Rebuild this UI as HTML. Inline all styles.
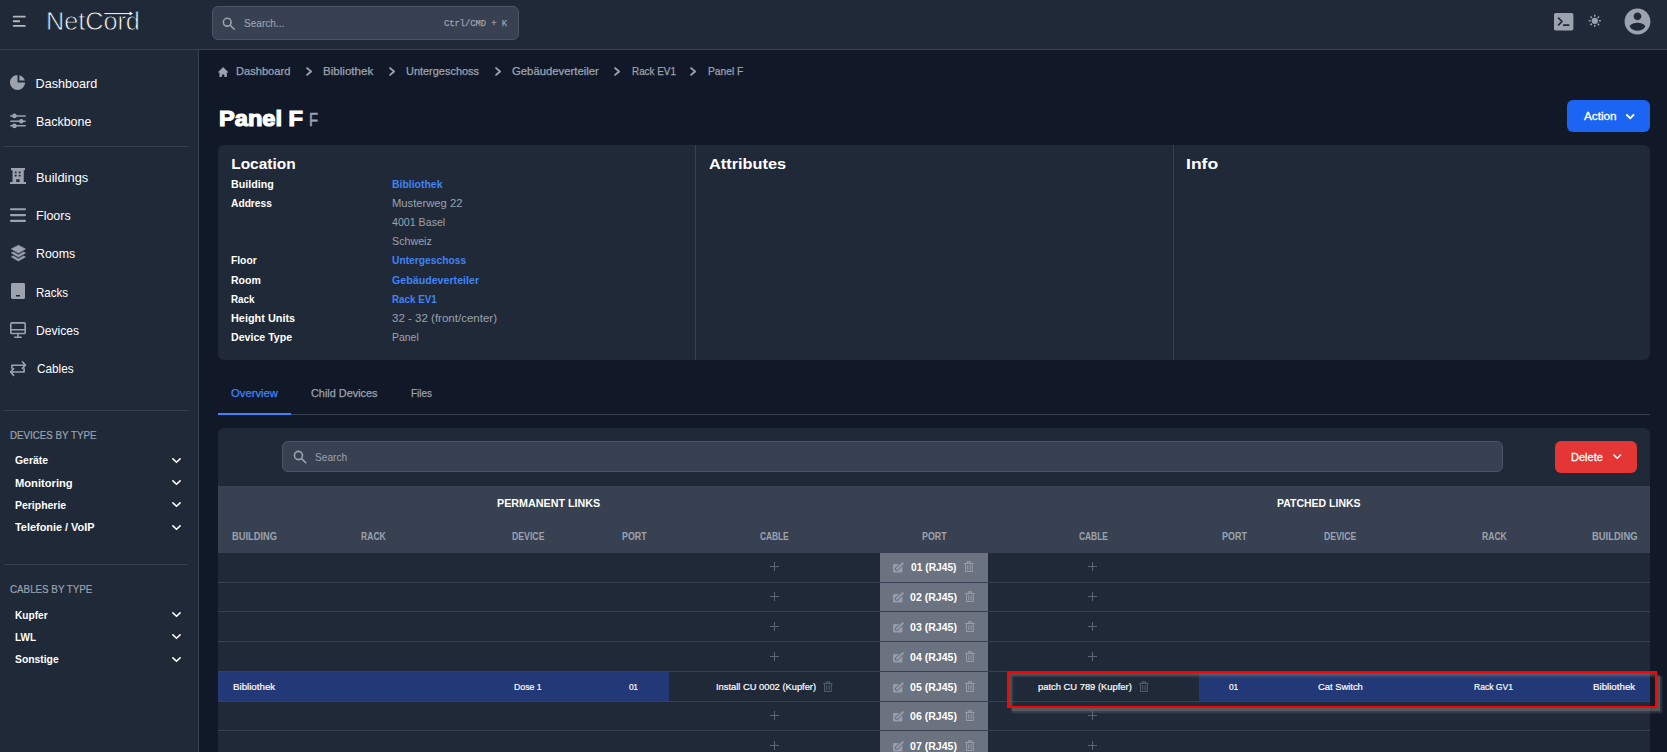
<!DOCTYPE html>
<html lang="de">
<head>
<meta charset="utf-8">
<title>NetCord – Panel F</title>
<style>
*{box-sizing:border-box;margin:0;padding:0}
html,body{width:1667px;height:752px;overflow:hidden;background:#111827}
body{position:relative;font-family:"Liberation Sans",Arial,sans-serif;color:#fff}
.t{position:absolute;white-space:nowrap;font-weight:400;font-style:normal;text-decoration:none;display:block;transform-origin:0 50%}
.a{position:absolute;display:block}
svg{position:absolute;display:block;overflow:visible}
nav.top{position:absolute;left:0;top:0;width:1667px;height:50px;background:#1f2937;border-bottom:1px solid #374151}
aside{position:absolute;left:0;top:50px;width:199px;height:702px;background:#1f2937;border-right:1px solid #374151}
hr{position:absolute;border:0;height:1px;background:#374151}
.box{position:absolute;background:#374151;border:1px solid #4b5563;border-radius:6px}
.btn{position:absolute;border-radius:6px}
.card{position:absolute;background:#1f2937;border-radius:6px}
.plus{position:absolute;width:9px;height:9px}
.plus:before{content:"";position:absolute;left:4px;top:0;width:1px;height:9px;background:#5c6573}
.plus:after{content:"";position:absolute;left:0;top:4px;width:9px;height:1px;background:#5c6573}
</style>
</head>
<body>
<!-- ===== top navigation ===== -->
<nav class="top"></nav>
<header>
<svg style="left:10.2px;top:12.1px" width="18.5" height="18.5" viewBox="0 0 20 20" fill="#b3b8c0"><path fill-rule="evenodd" d="M3 5a1 1 0 011-1h12a1 1 0 110 2H4a1 1 0 01-1-1zM3 10a1 1 0 011-1h6a1 1 0 110 2H4a1 1 0 01-1-1zM3 15a1 1 0 011-1h12a1 1 0 110 2H4a1 1 0 01-1-1z" clip-rule="evenodd"/></svg>
<svg style="left:104px;top:10px" width="30" height="8" viewBox="0 0 30 8"><path d="M0.4 3.6H27" stroke="#fff" stroke-width="1" fill="none"/><path d="M25.6 1.6L29 3.6L25.6 5.6Z" fill="#fff"/></svg>
<div class="box" style="left:212px;top:6px;width:307px;height:34px"></div>
<svg style="left:220.9px;top:15.8px" width="15.6" height="15.6" viewBox="0 0 20 20" fill="#9ca3af"><path fill-rule="evenodd" d="M8 4a4 4 0 100 8 4 4 0 000-8zM2 8a6 6 0 1110.89 3.476l4.817 4.817a1 1 0 01-1.414 1.414l-4.816-4.816A6 6 0 012 8z" clip-rule="evenodd"/></svg>
<a class="t" style='left:46.06px;top:7px;font-size:25.8px;line-height:28px;color:#fff;transform:scaleX(0.9764);-webkit-text-stroke:0.8px #1f2937;'>NetCord</a>
<span class="t" style='left:244.27px;top:17px;font-size:11px;line-height:12px;color:#9ca3af;transform:scaleX(0.9135);-webkit-text-stroke:0.15px #9ca3af;'>Search...</span>
<kbd class="t" style='left:444.02px;top:18px;font-size:9.3px;line-height:11px;color:#9ca3af;transform:scaleX(0.9420);font-family:"Liberation Mono", monospace;-webkit-text-stroke:0.25px #9ca3af;'>Ctrl/CMD + K</kbd>
<!-- terminal -->
<svg style="left:1553.7px;top:12.6px" width="19.4" height="17.5" viewBox="0 0 19.4 17.5"><rect x="0" y="0" width="19.4" height="17.5" rx="1.8" fill="#9ca3af"/><path d="M4.6 5.2L8.0 8.5L4.6 11.8M9.7 12.2H14.7" stroke="#1f2937" stroke-width="1.7" fill="none" stroke-linecap="round" stroke-linejoin="round"/></svg>
<!-- sun -->
<svg style="left:1587.2px;top:13.2px" width="15.6" height="15.6" viewBox="0 0 20 20" fill="#9ca3af"><path fill-rule="evenodd" d="M10 2a1 1 0 011 1v1a1 1 0 11-2 0V3a1 1 0 011-1zm4 8a4 4 0 11-8 0 4 4 0 018 0zm-.464 4.95l.707.707a1 1 0 001.414-1.414l-.707-.707a1 1 0 00-1.414 1.414zm2.12-10.607a1 1 0 010 1.414l-.706.707a1 1 0 11-1.414-1.414l.707-.707a1 1 0 011.414 0zM17 11a1 1 0 100-2h-1a1 1 0 100 2h1zm-7 4a1 1 0 011 1v1a1 1 0 11-2 0v-1a1 1 0 011-1zM5.05 6.464A1 1 0 106.465 5.05l-.708-.707a1 1 0 00-1.414 1.414l.707.707zm1.414 8.486l-.707.707a1 1 0 01-1.414-1.414l.707-.707a1 1 0 011.414 1.414zM4 11a1 1 0 100-2H3a1 1 0 000 2h1z" clip-rule="evenodd"/></svg>
<!-- avatar -->
<svg style="left:1621.6px;top:5.6px" width="31" height="31" viewBox="0 0 24 24" fill="#9ca3af"><path d="M12 2C6.48 2 2 6.48 2 12s4.48 10 10 10 10-4.48 10-10S17.52 2 12 2zm0 3c1.66 0 3 1.34 3 3s-1.34 3-3 3-3-1.34-3-3 1.34-3 3-3zm0 14.2c-2.5 0-4.71-1.28-6-3.22.03-1.99 4-3.08 6-3.08 1.99 0 5.97 1.09 6 3.08-1.29 1.94-3.5 3.22-6 3.22z"/></svg>
</header>

<!-- ===== sidebar ===== -->
<aside></aside>
<section id="sidebar">
<svg style="left:8.35px;top:73.19999999999999px" width="19.0" height="19.0" viewBox="0 0 20 20" ><path fill="#9ca3af" d="M2 10a8 8 0 018-8v8h8a8 8 0 11-16 0z"/><path fill="#9ca3af" d="M12 2.252A8.014 8.014 0 0117.748 8H12V2.252z"/></svg>
<svg style="left:10px;top:113px" width="16" height="16" viewBox="0 0 16 16" ><g stroke="#9ca3af" stroke-width="1.5" stroke-linecap="round"><path d="M0.8 2.9H15.2M0.8 8.2H15.2M0.8 12.7H15.2"/></g><g fill="#9ca3af"><circle cx="4.4" cy="2.9" r="2.3"/><circle cx="11.3" cy="8.2" r="2.3"/><circle cx="4.4" cy="12.9" r="2.3"/></g></svg>
<svg style="left:10px;top:167.9px" width="16" height="16.2" viewBox="0 0 16 16.2" ><path fill="#9ca3af" fill-rule="evenodd" d="M1 0H15V2.3H13.75V14H16V16.1H0V14H2.5V2.3H1Z M4.75 3.4H6.6V5.2H4.75Z M8.75 3.4H10.6V5.2H8.75Z M4.75 6.7H6.6V8.6H4.75Z M8.75 6.7H10.6V8.6H8.75Z M6.25 11.2H9.6V14H6.25Z"/></svg>
<svg style="left:10px;top:208px" width="16" height="14" viewBox="0 0 16 14" ><g stroke="#9ca3af" stroke-width="2.1" stroke-linecap="round"><path d="M1 1.25H15M1 7.1H15M1 12.85H15"/></g></svg>
<svg style="left:10.6px;top:245px" width="14.8" height="16.3" viewBox="0 0 14.8 16.3" ><g fill="#9ca3af" stroke="#9ca3af" stroke-width="0.6" stroke-linejoin="round"><path d="M7.4 0.3L14.5 3.9L7.4 8.1L0.3 3.9Z"/><path d="M0.3 7.9L2.3 6.9L7.4 9.9L12.5 6.9L14.5 7.9L7.4 12.1Z"/><path d="M0.3 11.9L2.3 10.9L7.4 13.9L12.5 10.9L14.5 11.9L7.4 16Z"/></g></svg>
<svg style="left:11px;top:283px" width="14" height="16" viewBox="0 0 14 16" ><path fill="#9ca3af" fill-rule="evenodd" d="M1.4 0H12.6A1.4 1.4 0 0114 1.4V14.6A1.4 1.4 0 0112.6 16H1.4A1.4 1.4 0 010 14.6V1.4A1.4 1.4 0 011.4 0Z M5 12.1H9V13.5H5Z"/></svg>
<svg style="left:10px;top:322px" width="16" height="16.2" viewBox="0 0 16 16.2" ><g fill="none" stroke="#9ca3af" stroke-width="1.6" stroke-linejoin="round" stroke-linecap="round"><rect x="0.8" y="0.9" width="14.4" height="10.6" rx="1.1"/><path d="M1 7.7H15M8 11.6V15.2M4.8 15.3H11.2"/></g></svg>
<svg style="left:10px;top:360.5px" width="16" height="15" viewBox="0 0 16 15" ><g fill="none" stroke="#9ca3af" stroke-width="1.6" stroke-linejoin="round" stroke-linecap="round"><path d="M1.9 7.2V4.2H15.2M12.4 0.8L15.4 4.1L12.4 7.4"/><path d="M14.1 7.9V11H0.9M3.6 7.6L0.6 11L3.6 14.4"/></g></svg>
<hr style="left:4px;top:146px;width:184px">
<hr style="left:4px;top:410px;width:184px">
<hr style="left:4px;top:564px;width:184px">
<a class="t" style='left:35.60px;top:77px;font-size:12.6px;line-height:14px;color:#fff;'>Dashboard</a>
<a class="t" style='left:35.61px;top:115px;font-size:12.6px;line-height:14px;color:#fff;transform:scaleX(0.9871);'>Backbone</a>
<a class="t" style='left:35.58px;top:171px;font-size:12.6px;line-height:14px;color:#fff;transform:scaleX(1.0219);'>Buildings</a>
<a class="t" style='left:35.61px;top:209px;font-size:12.6px;line-height:14px;color:#fff;transform:scaleX(0.9913);'>Floors</a>
<a class="t" style='left:35.62px;top:247px;font-size:12.6px;line-height:14px;color:#fff;transform:scaleX(0.9846);'>Rooms</a>
<a class="t" style='left:35.68px;top:286px;font-size:12.6px;line-height:14px;color:#fff;transform:scaleX(0.9171);'>Racks</a>
<a class="t" style='left:35.64px;top:324px;font-size:12.6px;line-height:14px;color:#fff;transform:scaleX(0.9610);'>Devices</a>
<a class="t" style='left:36.60px;top:362px;font-size:12.6px;line-height:14px;color:#fff;transform:scaleX(0.9330);'>Cables</a>
<h3 class="t" style='left:10.49px;top:429px;font-size:11px;line-height:12px;color:#9ca3af;transform:scaleX(0.8877);-webkit-text-stroke:0.2px #9ca3af;'>DEVICES BY TYPE</h3>
<h3 class="t" style='left:10.29px;top:583px;font-size:11px;line-height:12px;color:#9ca3af;transform:scaleX(0.8902);-webkit-text-stroke:0.2px #9ca3af;'>CABLES BY TYPE</h3>
<a class="t" style='left:15.20px;top:454px;font-size:11px;line-height:12px;color:#fff;transform:scaleX(0.9472);font-weight:700;'>Geräte</a>
<a class="t" style='left:15.20px;top:477px;font-size:11px;line-height:12px;color:#fff;transform:scaleX(1.0143);font-weight:700;'>Monitoring</a>
<a class="t" style='left:15.20px;top:499px;font-size:11px;line-height:12px;color:#fff;transform:scaleX(0.9509);font-weight:700;'>Peripherie</a>
<a class="t" style='left:15.20px;top:521px;font-size:11px;line-height:12px;color:#fff;transform:scaleX(0.9908);font-weight:700;'>Telefonie / VoIP</a>
<a class="t" style='left:15.20px;top:609px;font-size:11px;line-height:12px;color:#fff;transform:scaleX(0.9208);font-weight:700;'>Kupfer</a>
<a class="t" style='left:15.20px;top:631px;font-size:11px;line-height:12px;color:#fff;transform:scaleX(0.9066);font-weight:700;'>LWL</a>
<a class="t" style='left:15.20px;top:653px;font-size:11px;line-height:12px;color:#fff;transform:scaleX(0.9400);font-weight:700;'>Sonstige</a>
<svg style="left:172.25px;top:457.9px" width="9.0" height="5.2" viewBox="0 0 9.0 5.2" ><path d="M0.9 0.9L4.5 4.3L8.1 0.9" fill="none" stroke="#fff" stroke-width="1.6" stroke-linecap="round" stroke-linejoin="round"/></svg>
<svg style="left:172.25px;top:480.0px" width="9.0" height="5.2" viewBox="0 0 9.0 5.2" ><path d="M0.9 0.9L4.5 4.3L8.1 0.9" fill="none" stroke="#fff" stroke-width="1.6" stroke-linecap="round" stroke-linejoin="round"/></svg>
<svg style="left:172.25px;top:502.2px" width="9.0" height="5.2" viewBox="0 0 9.0 5.2" ><path d="M0.9 0.9L4.5 4.3L8.1 0.9" fill="none" stroke="#fff" stroke-width="1.6" stroke-linecap="round" stroke-linejoin="round"/></svg>
<svg style="left:172.25px;top:524.8px" width="9.0" height="5.2" viewBox="0 0 9.0 5.2" ><path d="M0.9 0.9L4.5 4.3L8.1 0.9" fill="none" stroke="#fff" stroke-width="1.6" stroke-linecap="round" stroke-linejoin="round"/></svg>
<svg style="left:172.25px;top:612.2px" width="9.0" height="5.2" viewBox="0 0 9.0 5.2" ><path d="M0.9 0.9L4.5 4.3L8.1 0.9" fill="none" stroke="#fff" stroke-width="1.6" stroke-linecap="round" stroke-linejoin="round"/></svg>
<svg style="left:172.25px;top:634.0px" width="9.0" height="5.2" viewBox="0 0 9.0 5.2" ><path d="M0.9 0.9L4.5 4.3L8.1 0.9" fill="none" stroke="#fff" stroke-width="1.6" stroke-linecap="round" stroke-linejoin="round"/></svg>
<svg style="left:172.25px;top:657.0px" width="9.0" height="5.2" viewBox="0 0 9.0 5.2" ><path d="M0.9 0.9L4.5 4.3L8.1 0.9" fill="none" stroke="#fff" stroke-width="1.6" stroke-linecap="round" stroke-linejoin="round"/></svg>
</section>

<!-- ===== main ===== -->
<main>
<svg style="left:216.7px;top:65.6px" width="12.3" height="12.3" viewBox="0 0 20 20" fill="#9ca3af"><path d="M10.707 2.293a1 1 0 00-1.414 0l-7 7a1 1 0 001.414 1.414L4 10.414V17a1 1 0 001 1h2a1 1 0 001-1v-2a1 1 0 011-1h2a1 1 0 011 1v2a1 1 0 001 1h2a1 1 0 001-1v-6.586l.293.293a1 1 0 001.414-1.414l-7-7z"/></svg>
<svg style="left:305.75px;top:67.0px" width="6.2" height="9.0" viewBox="0 0 6.2 9.0" ><path d="M1.1 1.1L5.1 4.5L1.1 7.9" fill="none" stroke="#9ca3af" stroke-width="1.9" stroke-linecap="round" stroke-linejoin="round"/></svg>
<svg style="left:388.75px;top:67.0px" width="6.2" height="9.0" viewBox="0 0 6.2 9.0" ><path d="M1.1 1.1L5.1 4.5L1.1 7.9" fill="none" stroke="#9ca3af" stroke-width="1.9" stroke-linecap="round" stroke-linejoin="round"/></svg>
<svg style="left:495px;top:67.0px" width="6.2" height="9.0" viewBox="0 0 6.2 9.0" ><path d="M1.1 1.1L5.1 4.5L1.1 7.9" fill="none" stroke="#9ca3af" stroke-width="1.9" stroke-linecap="round" stroke-linejoin="round"/></svg>
<svg style="left:613.7px;top:67.0px" width="6.2" height="9.0" viewBox="0 0 6.2 9.0" ><path d="M1.1 1.1L5.1 4.5L1.1 7.9" fill="none" stroke="#9ca3af" stroke-width="1.9" stroke-linecap="round" stroke-linejoin="round"/></svg>
<svg style="left:690.4px;top:67.0px" width="6.2" height="9.0" viewBox="0 0 6.2 9.0" ><path d="M1.1 1.1L5.1 4.5L1.1 7.9" fill="none" stroke="#9ca3af" stroke-width="1.9" stroke-linecap="round" stroke-linejoin="round"/></svg>
<a class="t" style='left:235.88px;top:65px;font-size:11px;line-height:12px;color:#9ca3af;transform:scaleX(1.0103);-webkit-text-stroke:0.25px #9ca3af;'>Dashboard</a>
<a class="t" style='left:323.13px;top:65px;font-size:11px;line-height:12px;color:#9ca3af;transform:scaleX(1.0527);-webkit-text-stroke:0.25px #9ca3af;'>Bibliothek</a>
<a class="t" style='left:406.37px;top:65px;font-size:11px;line-height:12px;color:#9ca3af;transform:scaleX(0.9950);-webkit-text-stroke:0.25px #9ca3af;'>Untergeschoss</a>
<a class="t" style='left:511.88px;top:65px;font-size:11px;line-height:12px;color:#9ca3af;transform:scaleX(1.0297);-webkit-text-stroke:0.25px #9ca3af;'>Gebäudeverteiler</a>
<a class="t" style='left:631.91px;top:65px;font-size:11px;line-height:12px;color:#9ca3af;transform:scaleX(0.8972);-webkit-text-stroke:0.25px #9ca3af;'>Rack EV1</a>
<a class="t" style='left:708.42px;top:65px;font-size:11px;line-height:12px;color:#9ca3af;transform:scaleX(0.9313);-webkit-text-stroke:0.25px #9ca3af;'>Panel F</a>
<div class="btn" style="left:1567px;top:100px;width:83px;height:32px;background:#1c64f2"></div>
<h1 class="t" style='left:218.58px;top:106px;font-size:22.4px;line-height:25px;color:#fff;transform:scaleX(1.0548);font-weight:700;-webkit-text-stroke:1.2px #fff;'>Panel F</h1>
<small class="t" style='left:309.33px;top:110px;font-size:17.5px;line-height:20px;color:#9ca3af;transform:scaleX(0.8500);-webkit-text-stroke:0.55px #9ca3af;'>F</small>
<span class="t" style='left:1583.56px;top:110px;font-size:11px;line-height:12px;color:#fff;transform:scaleX(1.0681);-webkit-text-stroke:0.3px #fff;'>Action</span>
<svg style="left:1625.9px;top:113.6px" width="8.4" height="5.6" viewBox="0 0 8.4 5.6"><path d="M0.9 1L4.2 4.3L7.5 1" stroke="#fff" stroke-width="1.85" fill="none" stroke-linecap="round" stroke-linejoin="round"/></svg>

<div class="card" style="left:218px;top:145px;width:1432px;height:214.5px"></div>
<div class="a" style="left:695px;top:145px;width:1px;height:214.5px;background:#374151"></div>
<div class="a" style="left:1173px;top:145px;width:1px;height:214.5px;background:#374151"></div>
<h2 class="t" style='left:231.20px;top:155px;font-size:15.5px;line-height:17px;color:#fff;font-weight:700;'>Location</h2>
<h2 class="t" style='left:709.00px;top:155px;font-size:15.5px;line-height:17px;color:#fff;transform:scaleX(1.0527);font-weight:700;'>Attributes</h2>
<h2 class="t" style='left:1185.67px;top:155px;font-size:15.5px;line-height:17px;color:#fff;transform:scaleX(1.1323);font-weight:700;'>Info</h2>
<dt class="t" style='left:231.20px;top:178px;font-size:11px;line-height:12px;color:#fff;transform:scaleX(0.9718);font-weight:700;'>Building</dt>
<dt class="t" style='left:231.20px;top:197px;font-size:11px;line-height:12px;color:#fff;transform:scaleX(0.9294);font-weight:700;'>Address</dt>
<dt class="t" style='left:231.20px;top:254px;font-size:11px;line-height:12px;color:#fff;transform:scaleX(0.9322);font-weight:700;'>Floor</dt>
<dt class="t" style='left:231.20px;top:274px;font-size:11px;line-height:12px;color:#fff;transform:scaleX(0.9575);font-weight:700;'>Room</dt>
<dt class="t" style='left:231.20px;top:293px;font-size:11px;line-height:12px;color:#fff;transform:scaleX(0.8941);font-weight:700;'>Rack</dt>
<dt class="t" style='left:231.20px;top:312px;font-size:11px;line-height:12px;color:#fff;transform:scaleX(0.9906);font-weight:700;'>Height Units</dt>
<dt class="t" style='left:231.20px;top:331px;font-size:11px;line-height:12px;color:#fff;transform:scaleX(0.9650);font-weight:700;'>Device Type</dt>
<a class="t" style='left:392.20px;top:178px;font-size:11px;line-height:12px;color:#3f83f8;transform:scaleX(0.9491);font-weight:700;'>Bibliothek</a>
<a class="t" style='left:392.20px;top:254px;font-size:11px;line-height:12px;color:#3f83f8;transform:scaleX(0.9332);font-weight:700;'>Untergeschoss</a>
<a class="t" style='left:392.20px;top:274px;font-size:11px;line-height:12px;color:#3f83f8;transform:scaleX(0.9692);font-weight:700;'>Gebäudeverteiler</a>
<a class="t" style='left:392.20px;top:293px;font-size:11px;line-height:12px;color:#3f83f8;transform:scaleX(0.8905);font-weight:700;'>Rack EV1</a>
<dd class="t" style='left:392.20px;top:197px;font-size:11px;line-height:12px;color:#9ca3af;transform:scaleX(1.0193);'>Musterweg 22</dd>
<dd class="t" style='left:392.20px;top:216px;font-size:11px;line-height:12px;color:#9ca3af;transform:scaleX(0.9670);'>4001 Basel</dd>
<dd class="t" style='left:392.20px;top:235px;font-size:11px;line-height:12px;color:#9ca3af;transform:scaleX(0.9713);'>Schweiz</dd>
<dd class="t" style='left:392.20px;top:312px;font-size:11px;line-height:12px;color:#9ca3af;transform:scaleX(1.0471);'>32 - 32 (front/center)</dd>
<dd class="t" style='left:392.20px;top:331px;font-size:11px;line-height:12px;color:#9ca3af;transform:scaleX(0.9498);'>Panel</dd>

<div class="a" style="left:218px;top:414px;width:1432px;height:1px;background:#374151"></div>
<div class="a" style="left:218px;top:413px;width:73px;height:2px;background:#3f83f8"></div>
<a class="t" style='left:230.88px;top:387px;font-size:11px;line-height:12px;color:#3f83f8;transform:scaleX(1.0239);-webkit-text-stroke:0.25px #3f83f8;'>Overview</a>
<a class="t" style='left:310.87px;top:387px;font-size:11px;line-height:12px;color:#9ca3af;transform:scaleX(0.9890);-webkit-text-stroke:0.25px #9ca3af;'>Child Devices</a>
<a class="t" style='left:410.61px;top:387px;font-size:11px;line-height:12px;color:#9ca3af;transform:scaleX(0.8968);-webkit-text-stroke:0.25px #9ca3af;'>Files</a>

<div class="card" style="left:218px;top:428px;width:1432px;height:340px"></div>
<div class="box" style="left:282px;top:441px;width:1221px;height:31px"></div>
<svg style="left:291.6px;top:448.9px" width="16.2" height="16.2" viewBox="0 0 20 20" fill="#9ca3af"><path fill-rule="evenodd" d="M8 4a4 4 0 100 8 4 4 0 000-8zM2 8a6 6 0 1110.89 3.476l4.817 4.817a1 1 0 01-1.414 1.414l-4.816-4.816A6 6 0 012 8z" clip-rule="evenodd"/></svg>
<div class="btn" style="left:1555px;top:441px;width:82px;height:32px;background:#e43735"></div>
<svg style="left:1612.9px;top:454.4px" width="8.4" height="5.6" viewBox="0 0 8.4 5.6"><path d="M0.9 1L4.2 4.3L7.5 1" stroke="#fff" stroke-width="1.6" fill="none" stroke-linecap="round" stroke-linejoin="round"/></svg>
<div class="a" style="left:218px;top:486px;width:1432px;height:67px;background:#374151"></div>
<div class="a" style="left:218px;top:582px;width:1432px;height:1px;background:#374151"></div>
<div class="a" style="left:880px;top:553px;width:108px;height:29px;background:#6b7280"></div>
<svg style="left:892.8px;top:561.9px" width="11.4" height="10.6" viewBox="0 0 11.4 10.6" ><rect x="0" y="2" width="9.4" height="8.5" rx="1.2" fill="#959cab"/><path d="M3.6 7.0L9.6 1.3" stroke="#6b7280" stroke-width="3.9" stroke-linecap="round"/><path d="M3.4 7.4L3.0 7.9L4.4 7.6" fill="#959cab"/><path d="M4.0 6.7L9.8 1.2" stroke="#959cab" stroke-width="2.1" stroke-linecap="round"/></svg>
<svg style="left:963.9px;top:560.7px" width="9.8" height="11.2" viewBox="0 0 9.8 11.2" ><g fill="none" stroke="#959cab" stroke-width="1.05" stroke-linejoin="round" stroke-linecap="round"><path d="M0.5 2.5H9.3M3.2 2.3V0.9H6.6V2.3M1.5 2.8V10.6H8.3V2.8M3.7 4.6V8.8M6.1 4.6V8.8"/></g></svg>
<i class="plus" style="left:770px;top:562px"></i>
<i class="plus" style="left:1088px;top:562px"></i>
<div class="a" style="left:218px;top:611px;width:1432px;height:1px;background:#374151"></div>
<div class="a" style="left:880px;top:583px;width:108px;height:28px;background:#6b7280"></div>
<svg style="left:892.8px;top:591.9px" width="11.4" height="10.6" viewBox="0 0 11.4 10.6" ><rect x="0" y="2" width="9.4" height="8.5" rx="1.2" fill="#959cab"/><path d="M3.6 7.0L9.6 1.3" stroke="#6b7280" stroke-width="3.9" stroke-linecap="round"/><path d="M3.4 7.4L3.0 7.9L4.4 7.6" fill="#959cab"/><path d="M4.0 6.7L9.8 1.2" stroke="#959cab" stroke-width="2.1" stroke-linecap="round"/></svg>
<svg style="left:964.7px;top:590.7px" width="9.8" height="11.2" viewBox="0 0 9.8 11.2" ><g fill="none" stroke="#959cab" stroke-width="1.05" stroke-linejoin="round" stroke-linecap="round"><path d="M0.5 2.5H9.3M3.2 2.3V0.9H6.6V2.3M1.5 2.8V10.6H8.3V2.8M3.7 4.6V8.8M6.1 4.6V8.8"/></g></svg>
<i class="plus" style="left:770px;top:592px"></i>
<i class="plus" style="left:1088px;top:592px"></i>
<div class="a" style="left:218px;top:641px;width:1432px;height:1px;background:#374151"></div>
<div class="a" style="left:880px;top:612px;width:108px;height:29px;background:#6b7280"></div>
<svg style="left:892.8px;top:621.9px" width="11.4" height="10.6" viewBox="0 0 11.4 10.6" ><rect x="0" y="2" width="9.4" height="8.5" rx="1.2" fill="#959cab"/><path d="M3.6 7.0L9.6 1.3" stroke="#6b7280" stroke-width="3.9" stroke-linecap="round"/><path d="M3.4 7.4L3.0 7.9L4.4 7.6" fill="#959cab"/><path d="M4.0 6.7L9.8 1.2" stroke="#959cab" stroke-width="2.1" stroke-linecap="round"/></svg>
<svg style="left:964.7px;top:620.7px" width="9.8" height="11.2" viewBox="0 0 9.8 11.2" ><g fill="none" stroke="#959cab" stroke-width="1.05" stroke-linejoin="round" stroke-linecap="round"><path d="M0.5 2.5H9.3M3.2 2.3V0.9H6.6V2.3M1.5 2.8V10.6H8.3V2.8M3.7 4.6V8.8M6.1 4.6V8.8"/></g></svg>
<i class="plus" style="left:770px;top:622px"></i>
<i class="plus" style="left:1088px;top:622px"></i>
<div class="a" style="left:218px;top:671px;width:1432px;height:1px;background:#374151"></div>
<div class="a" style="left:880px;top:642px;width:108px;height:29px;background:#6b7280"></div>
<svg style="left:892.8px;top:651.9px" width="11.4" height="10.6" viewBox="0 0 11.4 10.6" ><rect x="0" y="2" width="9.4" height="8.5" rx="1.2" fill="#959cab"/><path d="M3.6 7.0L9.6 1.3" stroke="#6b7280" stroke-width="3.9" stroke-linecap="round"/><path d="M3.4 7.4L3.0 7.9L4.4 7.6" fill="#959cab"/><path d="M4.0 6.7L9.8 1.2" stroke="#959cab" stroke-width="2.1" stroke-linecap="round"/></svg>
<svg style="left:964.7px;top:650.7px" width="9.8" height="11.2" viewBox="0 0 9.8 11.2" ><g fill="none" stroke="#959cab" stroke-width="1.05" stroke-linejoin="round" stroke-linecap="round"><path d="M0.5 2.5H9.3M3.2 2.3V0.9H6.6V2.3M1.5 2.8V10.6H8.3V2.8M3.7 4.6V8.8M6.1 4.6V8.8"/></g></svg>
<i class="plus" style="left:770px;top:652px"></i>
<i class="plus" style="left:1088px;top:652px"></i>
<div class="a" style="left:218px;top:701px;width:1432px;height:1px;background:#374151"></div>
<div class="a" style="left:880px;top:672px;width:108px;height:29px;background:#6b7280"></div>
<svg style="left:892.8px;top:681.9px" width="11.4" height="10.6" viewBox="0 0 11.4 10.6" ><rect x="0" y="2" width="9.4" height="8.5" rx="1.2" fill="#959cab"/><path d="M3.6 7.0L9.6 1.3" stroke="#6b7280" stroke-width="3.9" stroke-linecap="round"/><path d="M3.4 7.4L3.0 7.9L4.4 7.6" fill="#959cab"/><path d="M4.0 6.7L9.8 1.2" stroke="#959cab" stroke-width="2.1" stroke-linecap="round"/></svg>
<svg style="left:964.7px;top:680.7px" width="9.8" height="11.2" viewBox="0 0 9.8 11.2" ><g fill="none" stroke="#959cab" stroke-width="1.05" stroke-linejoin="round" stroke-linecap="round"><path d="M0.5 2.5H9.3M3.2 2.3V0.9H6.6V2.3M1.5 2.8V10.6H8.3V2.8M3.7 4.6V8.8M6.1 4.6V8.8"/></g></svg>
<div class="a" style="left:218px;top:672px;width:451px;height:29px;background:#233876"></div>
<div class="a" style="left:1199px;top:672px;width:451px;height:29px;background:#233876"></div>
<svg style="left:823.0px;top:680.8px" width="9.8" height="11.2" viewBox="0 0 9.8 11.2" ><g fill="none" stroke="#525b69" stroke-width="1.05" stroke-linejoin="round" stroke-linecap="round"><path d="M0.5 2.5H9.3M3.2 2.3V0.9H6.6V2.3M1.5 2.8V10.6H8.3V2.8M3.7 4.6V8.8M6.1 4.6V8.8"/></g></svg>
<svg style="left:1138.8px;top:680.8px" width="9.8" height="11.2" viewBox="0 0 9.8 11.2" ><g fill="none" stroke="#525b69" stroke-width="1.05" stroke-linejoin="round" stroke-linecap="round"><path d="M0.5 2.5H9.3M3.2 2.3V0.9H6.6V2.3M1.5 2.8V10.6H8.3V2.8M3.7 4.6V8.8M6.1 4.6V8.8"/></g></svg>
<div class="a" style="left:218px;top:730px;width:1432px;height:1px;background:#374151"></div>
<div class="a" style="left:880px;top:702px;width:108px;height:28px;background:#6b7280"></div>
<svg style="left:892.8px;top:710.9px" width="11.4" height="10.6" viewBox="0 0 11.4 10.6" ><rect x="0" y="2" width="9.4" height="8.5" rx="1.2" fill="#959cab"/><path d="M3.6 7.0L9.6 1.3" stroke="#6b7280" stroke-width="3.9" stroke-linecap="round"/><path d="M3.4 7.4L3.0 7.9L4.4 7.6" fill="#959cab"/><path d="M4.0 6.7L9.8 1.2" stroke="#959cab" stroke-width="2.1" stroke-linecap="round"/></svg>
<svg style="left:964.7px;top:709.7px" width="9.8" height="11.2" viewBox="0 0 9.8 11.2" ><g fill="none" stroke="#959cab" stroke-width="1.05" stroke-linejoin="round" stroke-linecap="round"><path d="M0.5 2.5H9.3M3.2 2.3V0.9H6.6V2.3M1.5 2.8V10.6H8.3V2.8M3.7 4.6V8.8M6.1 4.6V8.8"/></g></svg>
<i class="plus" style="left:770px;top:711px"></i>
<i class="plus" style="left:1088px;top:711px"></i>
<div class="a" style="left:218px;top:760px;width:1432px;height:1px;background:#374151"></div>
<div class="a" style="left:880px;top:731px;width:108px;height:29px;background:#6b7280"></div>
<svg style="left:892.8px;top:740.9px" width="11.4" height="10.6" viewBox="0 0 11.4 10.6" ><rect x="0" y="2" width="9.4" height="8.5" rx="1.2" fill="#959cab"/><path d="M3.6 7.0L9.6 1.3" stroke="#6b7280" stroke-width="3.9" stroke-linecap="round"/><path d="M3.4 7.4L3.0 7.9L4.4 7.6" fill="#959cab"/><path d="M4.0 6.7L9.8 1.2" stroke="#959cab" stroke-width="2.1" stroke-linecap="round"/></svg>
<svg style="left:964.7px;top:739.7px" width="9.8" height="11.2" viewBox="0 0 9.8 11.2" ><g fill="none" stroke="#959cab" stroke-width="1.05" stroke-linejoin="round" stroke-linecap="round"><path d="M0.5 2.5H9.3M3.2 2.3V0.9H6.6V2.3M1.5 2.8V10.6H8.3V2.8M3.7 4.6V8.8M6.1 4.6V8.8"/></g></svg>
<i class="plus" style="left:770px;top:741px"></i>
<i class="plus" style="left:1088px;top:741px"></i>
<span class="t" style='left:315.25px;top:451px;font-size:11px;line-height:12px;color:#9ca3af;transform:scaleX(0.9213);'>Search</span>
<span class="t" style='left:1571.05px;top:451px;font-size:11px;line-height:12px;color:#fff;-webkit-text-stroke:0.3px #fff;'>Delete</span>
<b class="t" style='left:497.00px;top:497px;font-size:11.4px;line-height:12px;color:#fff;transform:scaleX(0.9419);font-weight:700;'>PERMANENT LINKS</b>
<b class="t" style='left:1277.00px;top:497px;font-size:11.4px;line-height:12px;color:#fff;transform:scaleX(0.9220);font-weight:700;'>PATCHED LINKS</b>
<b class="t" style='left:231.50px;top:531px;font-size:10px;line-height:11px;color:#9ca3af;transform:scaleX(0.9320);font-weight:700;'>BUILDING</b>
<b class="t" style='left:361.25px;top:531px;font-size:10px;line-height:11px;color:#9ca3af;transform:scaleX(0.8596);font-weight:700;'>RACK</b>
<b class="t" style='left:511.75px;top:531px;font-size:10px;line-height:11px;color:#9ca3af;transform:scaleX(0.8719);font-weight:700;'>DEVICE</b>
<b class="t" style='left:621.50px;top:531px;font-size:10px;line-height:11px;color:#9ca3af;transform:scaleX(0.8854);font-weight:700;'>PORT</b>
<b class="t" style='left:760.25px;top:531px;font-size:10px;line-height:11px;color:#9ca3af;transform:scaleX(0.8500);letter-spacing:-0.164px;font-weight:700;'>CABLE</b>
<b class="t" style='left:921.75px;top:531px;font-size:10px;line-height:11px;color:#9ca3af;transform:scaleX(0.8854);font-weight:700;'>PORT</b>
<b class="t" style='left:1079.00px;top:531px;font-size:10px;line-height:11px;color:#9ca3af;transform:scaleX(0.8500);letter-spacing:-0.090px;font-weight:700;'>CABLE</b>
<b class="t" style='left:1221.75px;top:531px;font-size:10px;line-height:11px;color:#9ca3af;transform:scaleX(0.8945);font-weight:700;'>PORT</b>
<b class="t" style='left:1323.75px;top:531px;font-size:10px;line-height:11px;color:#9ca3af;transform:scaleX(0.8652);font-weight:700;'>DEVICE</b>
<b class="t" style='left:1481.50px;top:531px;font-size:10px;line-height:11px;color:#9ca3af;transform:scaleX(0.8596);font-weight:700;'>RACK</b>
<b class="t" style='left:1591.50px;top:531px;font-size:10px;line-height:11px;color:#9ca3af;transform:scaleX(0.9423);font-weight:700;'>BUILDING</b>
<b class="t" style='left:910.75px;top:561px;font-size:11.3px;line-height:12px;color:#fff;transform:scaleX(0.9064);font-weight:700;'>01 (RJ45)</b>
<b class="t" style='left:910.25px;top:591px;font-size:11.3px;line-height:12px;color:#fff;transform:scaleX(0.9361);font-weight:700;'>02 (RJ45)</b>
<b class="t" style='left:910.25px;top:621px;font-size:11.3px;line-height:12px;color:#fff;transform:scaleX(0.9361);font-weight:700;'>03 (RJ45)</b>
<b class="t" style='left:910.25px;top:651px;font-size:11.3px;line-height:12px;color:#fff;transform:scaleX(0.9361);font-weight:700;'>04 (RJ45)</b>
<b class="t" style='left:910.25px;top:681px;font-size:11.3px;line-height:12px;color:#fff;transform:scaleX(0.9361);font-weight:700;'>05 (RJ45)</b>
<b class="t" style='left:910.25px;top:710px;font-size:11.3px;line-height:12px;color:#fff;transform:scaleX(0.9361);font-weight:700;'>06 (RJ45)</b>
<b class="t" style='left:910.25px;top:740px;font-size:11.3px;line-height:12px;color:#fff;transform:scaleX(0.9361);font-weight:700;'>07 (RJ45)</b>
<span class="t" style='left:233.10px;top:681px;font-size:9.9px;line-height:11px;color:#fff;transform:scaleX(0.9842);-webkit-text-stroke:0.2px #fff;'>Bibliothek</span>
<span class="t" style='left:514.34px;top:681px;font-size:9.9px;line-height:11px;color:#fff;transform:scaleX(0.8829);-webkit-text-stroke:0.2px #fff;'>Dose 1</span>
<span class="t" style='left:628.84px;top:681px;font-size:9.9px;line-height:11px;color:#fff;transform:scaleX(0.8500);letter-spacing:-0.516px;-webkit-text-stroke:0.2px #fff;'>01</span>
<span class="t" style='left:716.34px;top:681px;font-size:9.9px;line-height:11px;color:#fff;transform:scaleX(0.9448);-webkit-text-stroke:0.2px #fff;'>Install CU 0002 (Kupfer)</span>
<span class="t" style='left:1037.99px;top:681px;font-size:9.9px;line-height:11px;color:#fff;transform:scaleX(0.9492);-webkit-text-stroke:0.2px #fff;'>patch CU 789 (Kupfer)</span>
<span class="t" style='left:1228.88px;top:681px;font-size:9.9px;line-height:11px;color:#fff;transform:scaleX(0.8500);letter-spacing:-0.163px;-webkit-text-stroke:0.2px #fff;'>01</span>
<span class="t" style='left:1317.69px;top:681px;font-size:9.9px;line-height:11px;color:#fff;transform:scaleX(0.9488);-webkit-text-stroke:0.2px #fff;'>Cat Switch</span>
<span class="t" style='left:1474.39px;top:681px;font-size:9.9px;line-height:11px;color:#fff;transform:scaleX(0.8642);-webkit-text-stroke:0.2px #fff;'>Rack GV1</span>
<span class="t" style='left:1593.30px;top:681px;font-size:9.9px;line-height:11px;color:#fff;transform:scaleX(0.9842);-webkit-text-stroke:0.2px #fff;'>Bibliothek</span>
<div class="a" style="left:1007px;top:671px;width:650px;height:37px;border:2px solid #ff0000;box-shadow:3.2px 3.2px 1px rgba(128,128,128,.38),5px 5px 1.6px rgba(128,128,128,.3),inset 2.8px 2.8px 1.2px rgba(128,128,128,.34),inset 4.4px 4.4px 1.8px rgba(128,128,128,.2)"></div>
</main>
</body>
</html>
